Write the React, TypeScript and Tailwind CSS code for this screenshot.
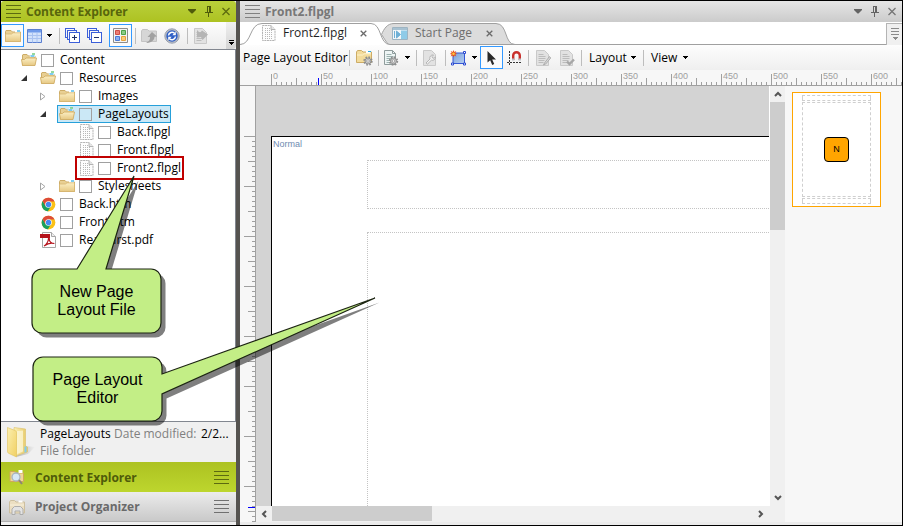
import React, { type ReactNode } from "react";

const UI = "font-['Open_Sans','Noto_Sans',sans-serif]";

/* ---------- small glyphs ---------- */

function Grip({ color }: { color: string }) {
  return (
    <svg width="15" height="13" viewBox="0 0 15 13" shapeRendering="crispEdges" className="shrink-0">
      <path d="M0 .5h15M0 4.5h15M0 8.5h15M0 12.5h15" stroke={color} />
    </svg>
  );
}

function Caret() {
  return (
    <svg width="5" height="3" viewBox="0 0 5 3" className="shrink-0" shapeRendering="crispEdges">
      <path d="M0 0h5v1h-1v1h-1v1h-1v-1h-1v-1h-1z" fill="#000" />
    </svg>
  );
}

function WindowButtons({ color }: { color: string }) {
  return (
    <div className="ml-auto flex items-center gap-[9px]">
      <button type="button" aria-label="Window menu">
        <svg width="8" height="11" viewBox="0 0 8 11" className="block">
          <path d="M0 3h8v1L4.500 7.500h-1L0 4z" fill={color} />
        </svg>
      </button>
      <button type="button" aria-label="Pin">
        <svg width="8" height="11" viewBox="0 0 8 11" className="block" shapeRendering="crispEdges" fill="none" stroke={color}>
          <path d="M2.500 0v6M2 .5h4M4.500 0v6M5.500 0v6M0 6.500h8M3.500 7v4" />
        </svg>
      </button>
      <button type="button" aria-label="Close">
        <svg width="8" height="11" viewBox="0 0 8 11" className="block">
          <path d="M.5 2l7 7M7.500 2l-7 7" stroke={color} strokeWidth="1.300" opacity=".85" />
        </svg>
      </button>
    </div>
  );
}

function Separator() {
  return <div className="h-4 w-px shrink-0 bg-[#bdbdbd]" />;
}

/* ---------- icons ---------- */

function Folder({ open = false }: { open?: boolean }) {
  return (
    <svg width="16" height="16" viewBox="0 0 16 16" className="shrink-0">
      <defs>
        <linearGradient id="fold" x1="0" y1="0" x2="0" y2="1">
          <stop offset="0" stopColor="#fcefc4" />
          <stop offset="1" stopColor="#e6c883" />
        </linearGradient>
      </defs>
      {open ? (
        <>
          <path d="M1.500 13.500V3l.5-.5h4l1.500 1.500h6.500v4" fill="#e8cf93" stroke="#cdac66" />
          <path d="M8.500 4l3-2.500 2.500 1v2.500H9z" fill="#fff" />
          <path d="M11 2h3" stroke="#4fc05a" strokeWidth="1.200" />
          <path d="M9.500 4h4" stroke="#38b1ea" strokeWidth="1.300" />
          <path d="M.5 7.500h3L5 6h10.500l-1.500 7.500H1.500z" fill="url(#fold)" stroke="#d0ad63" strokeWidth=".9" />
        </>
      ) : (
        <>
          <path d="M.5 13.500V3.500l.5-1h5L7.500 4h8v9.500z" fill="#e8cf93" stroke="#cdac66" />
          <path d="M10 2h5v3h-5z" fill="#fff" />
          <path d="M12 3h3" stroke="#38b1ea" strokeWidth="1.300" />
          <path d="M.5 6h6L8 4.800h7.500v8.700H.5z" fill="url(#fold)" stroke="#d6b570" strokeWidth=".8" />
        </>
      )}
    </svg>
  );
}

function Gear({ x, y }: { x: number; y: number }) {
  return (
    <g transform={`translate(${x} ${y})`}>
      <circle r="3.800" fill="none" stroke="#8d8d8d" strokeWidth="1.800" strokeDasharray="1.600 1.385" />
      <circle r="3" fill="#c6c6c6" stroke="#858585" strokeWidth=".8" />
      <circle r="1.200" fill="#fff" stroke="#777" strokeWidth=".5" />
    </g>
  );
}

function LayoutFile() {
  return (
    <svg width="14" height="16" viewBox="0 0 14 16" className="shrink-0">
      <path d="M.5.500h8.500l4 4v11H.5z" fill="#fdfdfd" stroke="#b4b4b4" strokeDasharray="2 .6" />
      <path d="M9 .5v4h4" fill="#e6e6e6" stroke="#b4b4b4" />
      <g stroke="#b8b8b8" strokeDasharray="1 1" shapeRendering="crispEdges">
        <path d="M3 3.500h5M3 5.500h8M3 7.500h8M3 9.500h8M3 11.500h8M3 13.500h8" />
      </g>
    </svg>
  );
}

function Chrome() {
  return (
    <svg width="15" height="15" viewBox="0 0 48 48" className="shrink-0">
      <circle cx="24" cy="24" r="22" fill="#fbc116" />
      <path d="M5 13A22 22 0 0 0 22 45.900L32.500 28.500 24 24 15 29z" fill="#1aa05d" />
      <path d="M5 13l9.500 16.500L24 14h19.100A22 22 0 0 0 5 13z" fill="#dd4b39" />
      <circle cx="24" cy="24" r="10.500" fill="#fff" />
      <circle cx="24" cy="24" r="8.500" fill="#4688f1" />
    </svg>
  );
}

function Pdf() {
  return (
    <svg width="16" height="16" viewBox="0 0 16 16" className="shrink-0">
      <path d="M2.500.500h9l4 4v11h-13z" fill="#fff" stroke="#a6a6a6" />
      <path d="M11.500.500v4h4" fill="#eee" stroke="#a6a6a6" />
      <path d="M0 2h10v4H0z" fill="#b5121b" />
      <path d="M4 14c2-1 4.500-4.500 4.500-7.500 0-1.500 1-1.200.8.3-.3 2.700 2 4.700 5 4.700-3-1-7.500.5-10.300 2.500z" fill="none" stroke="#b5121b" strokeWidth="1.200" />
    </svg>
  );
}

function GridIcon() {
  return (
    <svg width="15" height="14" viewBox="0 0 15 14">
      <path d="M.5.500h14v13H.5z" fill="#d3e3fb" stroke="#5a7fd0" />
      <path d="M1 1h13v2.500H1z" fill="#6f9bea" />
      <path d="M1 6.500h13M1 9.500h13M5.500 4v9.500M10 4v9.500" stroke="#a9c3f0" />
    </svg>
  );
}

function StackIcon({ plus = false }: { plus?: boolean }) {
  return (
    <svg width="15" height="15" viewBox="0 0 15 15" shapeRendering="crispEdges" fill="none" stroke="#3b5fd9">
      <path d="M2.500 9.500h-2v-9h9v2M4.500 11.500h-2v-9h9v2" />
      <path d="M4.500 4.500h10v10h-10z" fill="#fff" />
      <path d="M7 9.500h5" stroke="#1c2f6b" />
      {plus && <path d="M9.500 7v5" stroke="#1c2f6b" />}
    </svg>
  );
}

function TilesIcon() {
  return (
    <svg width="15" height="15" viewBox="0 0 15 15">
      <path d="M.5.500h14v14H.5z" fill="#f4f4f4" stroke="#8d8d8d" />
      <path d="M2.500 2.500h4v4h-4z" fill="#ec7d73" stroke="#cf4d44" />
      <path d="M8.500 2.500h4v4h-4z" fill="#8ccb86" stroke="#4da449" />
      <path d="M2.500 8.500h4v4h-4z" fill="#8aaef0" stroke="#4a7ad6" />
      <path d="M8.500 8.500h4v4h-4z" fill="#fbcb78" stroke="#e6a23c" />
    </svg>
  );
}

function FolderOut() {
  return (
    <svg width="17" height="16" viewBox="0 0 17 16">
      <path d="M.5 13.500V3l1-1.500h5L8 3h7.500v10.500z" fill="#d6d6d6" stroke="#c4c4c4" />
      <path d="M11 4l5 4.500-2.500.2C13.500 12 10 15 5 15c3-1.500 4.300-3.500 4-6L6.500 9z" fill="#a1a1a1" />
    </svg>
  );
}

function RefreshIcon() {
  return (
    <svg width="16" height="16" viewBox="0 0 16 16">
      <circle cx="8" cy="8" r="7.200" fill="#b9bcc4" stroke="#98a0b0" />
      <circle cx="8" cy="8" r="5.700" fill="#2e5fc6" />
      <path d="M4.500 7.500A3.600 3.600 0 0 1 10.500 5.300M11.500 8.500A3.600 3.600 0 0 1 5.500 10.700" fill="none" stroke="#fff" strokeWidth="1.500" />
      <path d="M11.800 3.700v3.600H8.300zM4.200 12.300V8.700h3.500z" fill="#fff" />
    </svg>
  );
}

function GreyDoc({ mark }: { mark: "pencil" | "check" | "wrench" | "arrow" }) {
  return (
    <svg width="15" height="16" viewBox="0 0 15 16">
      <path d="M.5.500h8l4 4v11H.5z" fill="#e2e2e2" stroke="#c9c9c9" />
      {mark !== "wrench" && <path d="M2.500 4.500h5M2.500 6.500h7M2.500 8.500h7M2.500 10.500h6M2.500 12.500h5" stroke="#bcbcbc" />}
      {mark === "pencil" && <path d="M13.500 6.500l-5 6.500-1 2 2.200-1 5-6z" fill="#d8d8d8" stroke="#a8a8a8" strokeWidth=".9" />}
      {mark === "check" && <path d="M7 11.500l2.500 2.500 4.500-4.500" fill="none" stroke="#a6a6a6" strokeWidth="2.400" />}
      {mark === "wrench" && (
        <path d="M3 13l4-4a3 3 0 0 1 3.500-4L9 6.500l.5 1.500 1.500.3 1.400-1.300a3 3 0 0 1-4 3.200L4.500 14z" fill="#f3f3f3" stroke="#b0b0b0" strokeWidth=".9" />
      )}
      {mark === "arrow" && <path d="M3 2l3 3 2-2.500 6 4-5.500 5.500-1.500-3-4 .5z" fill="#b5b5b5" />}
    </svg>
  );
}

function FolderGear() {
  return (
    <svg width="17" height="16" viewBox="0 0 17 16">
      <path d="M.5 12.500V2l1-1.500h4L7 2h8.500v10.500z" fill="#f3dc9c" stroke="#cdac66" />
      <path d="M10 1h4.500v2.500H10z" fill="#fff" />
      <path d="M12 1.500h3" stroke="#2aa9e0" />
      <path d="M1 5h5.500L8 3.800h7" fill="none" stroke="#fdf2cd" />
      <Gear x={12} y={11} />
    </svg>
  );
}

function DocGear() {
  return (
    <svg width="15" height="16" viewBox="0 0 15 16">
      <path d="M.5.500h8l3 3v11H.5z" fill="#eef5f5" stroke="#8f9c9c" />
      <path d="M8.500.500v3h3" fill="none" stroke="#8f9c9c" />
      <path d="M2.500 4.500h5M2.500 6.500h7M2.500 8.500h6M2.500 10.500h4M2.500 12.500h4" stroke="#9cb3b0" />
      <Gear x={9.500} y={11} />
    </svg>
  );
}

function ShapeIcon() {
  return (
    <svg width="17" height="16" viewBox="0 0 17 16">
      <defs>
        <linearGradient id="shape" x1="0" y1="0" x2="1" y2="1">
          <stop offset="0" stopColor="#7ba3dc" />
          <stop offset="1" stopColor="#b5cdf0" />
        </linearGradient>
      </defs>
      <path d="M3 3h11.500v10.500H3z" fill="url(#shape)" stroke="#3457d5" />
      <g fill="#fff" stroke="#2b4ad0">
        <path d="M13.500 1.500h2v2h-2zM1.500 13h2v2h-2zM13.500 13h2v2h-2z" />
      </g>
      <path d="M3.500 0l.8 2 2-1-1 2 2 .8-2 .8 1 2-2-1-.8 2-.8-2-2 1 1-2-2-.8 2-.8-1-2 2 1z" fill="#e8501e" />
      <circle cx="3.500" cy="3.800" r="1.300" fill="#ffc93c" />
    </svg>
  );
}

function PointerIcon() {
  return (
    <svg width="9" height="14" viewBox="0 0 9 14">
      <path d="M.5 0v11.500l2.700-2.300 2 4.800 2-.9-2-4.600H9z" fill="#2a2a2a" />
    </svg>
  );
}

function MagnetIcon() {
  return (
    <svg width="15" height="14" viewBox="0 0 15 14">
      <path d="M6.200 9V4.500a3.300 3.300 0 0 1 6.600 0V9" fill="none" stroke="#c9302c" strokeWidth="2.400" />
      <path d="M5 7.500h2.400V9.500H5zM11.600 7.500H14v2h-2.400z" fill="#b9bec4" />
      <path d="M2.500 0v14M0 11.500h15" stroke="#333" strokeDasharray="2 1" shapeRendering="crispEdges" />
    </svg>
  );
}

function StartPageIcon() {
  return (
    <svg width="16" height="13" viewBox="0 0 16 13">
      <path d="M.5.500h15v12H.5z" fill="#f3f6f8" stroke="#9eb4c2" />
      <path d="M1 1h14v2H1z" fill="#a8c2d2" />
      <path d="M9 3.500h6V12H9z" fill="#8fcbe8" />
      <path d="M2.500 4v7M4.500 4l4 3.500-4 3.500z" stroke="#6fb0d6" fill="#6fb0d6" />
    </svg>
  );
}

function LargeFolder() {
  return (
    <svg width="29" height="32" viewBox="0 0 29 32" className="shrink-0">
      <defs>
        <linearGradient id="big" x1="0" y1="0" x2="1" y2="0">
          <stop offset="0" stopColor="#fbf0b4" />
          <stop offset="1" stopColor="#e5c765" />
        </linearGradient>
        <linearGradient id="flap" x1="0" y1="0" x2="1" y2="1">
          <stop offset="0" stopColor="#fbefad" />
          <stop offset="1" stopColor="#f1d064" />
        </linearGradient>
        <linearGradient id="cast" x1="0" y1="0" x2="1" y2="0">
          <stop offset="0" stopColor="#b4b4b4" />
          <stop offset="1" stopColor="#f0f0f0" />
        </linearGradient>
      </defs>
      <path d="M18 20l10 1-7 7-12 3z" fill="url(#cast)" />
      <path d="M7 1.500l11.500 1.500v17l2 1v5L8 30z" fill="url(#big)" stroke="#dcc067" strokeWidth=".6" />
      <path d="M10 5l6-.5v21L10 28z" fill="#fdf9df" opacity=".7" />
      <path d="M.5 1.500L8 4.500c1 .5 1.500 1 1.500 2V31L2 27.500C1 27 .5 26.500.500 25.500z" fill="url(#flap)" stroke="#e0c25d" strokeWidth=".6" />
      <path d="M17.500 20.500h2v5.500l-2 .7z" fill="#7fcbee" />
    </svg>
  );
}

function ExplorerIcon() {
  return (
    <svg width="16" height="16" viewBox="0 0 16 16">
      <path d="M1 12.500V2.500h5L7.500 4H14.500v8.500z" fill="#f0d596" stroke="#cfa95a" />
      <path d="M9.500 1h4v3h-4z" fill="#fff" />
      <circle cx="7" cy="8" r="4" fill="#d7e8f8" stroke="#a7b3c0" strokeWidth="1.300" />
      <path d="M10 11l3 4" stroke="#8d8577" strokeWidth="2" />
    </svg>
  );
}

function OrganizerIcon() {
  return (
    <svg width="16" height="16" viewBox="0 0 16 16">
      <path d="M.5 14V3l1-1.500h4L7 3h8.500v11z" fill="#ecdfc2" stroke="#cdbf9f" />
      <path d="M9.500 1.500h4v2h-4z" fill="#fff" />
      <path d="M1 6h14" stroke="#f8f1dd" />
      <path d="M3 15.500V10l2.500-2.500h6L14 10v5.500h-3V12H6v3.500z" fill="#e3e3e3" stroke="#a8a8a8" strokeWidth=".9" />
    </svg>
  );
}

/* ---------- content tree ---------- */

type Kind = "open" | "closed" | "layout" | "html" | "pdf";
type Node = { label: string; kind: Kind; indent: string; toggle?: "open" | "closed"; state?: "selected" | "marked" };

const nodes: Node[] = [
  { label: "Content", kind: "open", indent: "pl-0" },
  { label: "Resources", kind: "open", indent: "pl-[19px]", toggle: "open" },
  { label: "Images", kind: "closed", indent: "pl-[38px]", toggle: "closed" },
  { label: "PageLayouts", kind: "open", indent: "pl-[38px]", toggle: "open", state: "selected" },
  { label: "Back.flpgl", kind: "layout", indent: "pl-[57px]" },
  { label: "Front.flpgl", kind: "layout", indent: "pl-[57px]" },
  { label: "Front2.flpgl", kind: "layout", indent: "pl-[57px]", state: "marked" },
  { label: "Stylesheets", kind: "closed", indent: "pl-[38px]", toggle: "closed" },
  { label: "Back.htm", kind: "html", indent: "pl-[19px]" },
  { label: "Front.htm", kind: "html", indent: "pl-[19px]" },
  { label: "ReadFirst.pdf", kind: "pdf", indent: "pl-[19px]" },
];

function NodeIcon({ kind }: { kind: Kind }) {
  if (kind === "open") return <Folder open />;
  if (kind === "closed") return <Folder />;
  if (kind === "layout") return <LayoutFile />;
  if (kind === "html") return <Chrome />;
  return <Pdf />;
}

function TreeRow({ node }: { node: Node }) {
  const id = "node-" + node.label;
  return (
    <li className={`flex h-[18px] items-center ${node.indent}`}>
      <span className="flex w-[17px] shrink-0 items-center">
        {node.toggle === "open" && (
          <svg width="6" height="6" viewBox="0 0 6 6"><path d="M6 0v6H0z" fill="#333" /></svg>
        )}
        {node.toggle === "closed" && (
          <svg width="6" height="9" viewBox="0 0 6 9"><path d="M.5 1v7L5 4.500z" fill="#fff" stroke="#a6a6a6" /></svg>
        )}
      </span>
      <div
        className={`relative flex h-[18px] items-center px-[2px] ${
          node.state === "selected" ? "bg-[#cbe8f6] outline-1 -outline-offset-1 outline-[#26a0da]" : ""
        }`}
      >
        {node.state === "marked" && (
          <span className="absolute -bottom-[3px] -left-px -right-[1px] -top-[3px] border-2 border-[#c00000]" />
        )}
        <span className={`flex w-[20px] shrink-0 items-center ${node.kind === "layout" ? "pl-[2px]" : node.kind === "html" ? "pl-px" : ""}`}>
          <NodeIcon kind={node.kind} />
        </span>
        <input
          id={id}
          type="checkbox"
          className={`size-[13px] shrink-0 appearance-none border border-[#a0a0a0] ${node.state === "selected" ? "bg-transparent" : "bg-white"}`}
        />
        <label htmlFor={id} className="whitespace-nowrap pl-[6px] text-[12px] leading-[18px] text-black">
          {node.label}
        </label>
      </div>
    </li>
  );
}

/* ---------- left panel ---------- */

function IconButton({ label, active = false, width, children }: { label: string; active?: boolean; width: string; children: ReactNode }) {
  return (
    <button
      type="button"
      aria-label={label}
      className={`flex h-[23px] shrink-0 items-center justify-center ${width} ${active ? "border border-[#3399ff] bg-[#fbfbfb]" : ""}`}
    >
      {children}
    </button>
  );
}

function Explorer() {
  return (
    <aside className="flex w-[235px] shrink-0 flex-col bg-[#f0f0f0]">
      <header className="flex h-[21px] shrink-0 items-center rounded-t-[3px] bg-linear-to-b from-[#b9d03a] to-[#adc221] pl-[5px] pr-[6px]">
        <Grip color="#5c6a10" />
        <h2 className="pl-[5px] text-[12px] font-bold leading-[18px] text-[#58650c]">Content Explorer</h2>
        <WindowButtons color="#4f5b0a" />
      </header>
      <div className="flex h-[28px] shrink-0 items-center border-b border-[#828790] bg-linear-to-b from-[#fdfdfd] to-[#ececec]">
        <IconButton label="Open folder" active width="w-[23px]"><Folder /></IconButton>
        <IconButton label="View" width="w-[20px]"><GridIcon /></IconButton>
        <IconButton label="View options" width="w-[10px]"><Caret /></IconButton>
        <div className="flex w-[10px] justify-center"><Separator /></div>
        <IconButton label="Expand all" width="w-[16px]"><StackIcon plus /></IconButton>
        <IconButton label="Collapse all" width="w-[29px]"><StackIcon /></IconButton>
        <IconButton label="Show all files" active width="w-[23px]"><TilesIcon /></IconButton>
        <div className="flex w-[7px] justify-center"><Separator /></div>
        <IconButton label="Import" width="w-[21px]"><FolderOut /></IconButton>
        <IconButton label="Refresh" width="w-[24px]"><RefreshIcon /></IconButton>
        <div className="flex w-[7px] justify-center"><Separator /></div>
        <IconButton label="Properties" width="w-[21px]"><GreyDoc mark="arrow" /></IconButton>
        <button type="button" aria-label="More" className="ml-auto flex h-full w-[10px] flex-col items-center justify-end gap-px rounded-br bg-linear-to-b from-[#f0f0f0] to-[#d4d4d4] pb-1">
          <span className="h-px w-[5px] bg-black" />
          <Caret />
        </button>
      </div>
      <ul className="min-h-0 flex-1 overflow-hidden border-r border-[#828790] bg-white pl-px pt-px">
        {nodes.map((n) => <TreeRow key={n.label} node={n} />)}
      </ul>
      <div className="flex h-[41px] shrink-0 items-center border-t border-[#828790] pl-[6px]">
        <LargeFolder />
        <div className="pl-1 text-[12px] leading-[17px]">
          <div className="flex">
            <span className="w-[74px] text-black">PageLayouts</span>
            <span className="w-[87px] whitespace-nowrap text-[#808080]">Date modified:</span>
            <span className="text-black">2/2...</span>
          </div>
          <div className="text-[#808080]">File folder</div>
        </div>
      </div>
      <button type="button" className="flex h-[30px] shrink-0 items-center bg-linear-to-b from-[#adc221] to-[#bdd62e] pl-2 pr-[7px] text-[12px] font-bold text-[#4f5b0a]">
        <ExplorerIcon />
        <span className="flex-1 pl-[10px] pt-px text-left">Content Explorer</span>
        <Grip color="#5c6a10" />
      </button>
      <button type="button" className="flex h-[30px] shrink-0 items-center border-b border-[#b0b0b0] bg-linear-to-b from-[#ececec] to-[#c9c9c9] pl-2 pr-[7px] text-[12px] font-bold text-[#6a6a6a]">
        <OrganizerIcon />
        <span className="flex-1 pl-[10px] pt-px text-left">Project Organizer</span>
        <Grip color="#707070" />
      </button>
      <div className="h-[3px] shrink-0 bg-[#f0f0f0]" />
    </aside>
  );
}

/* ---------- right panel ---------- */

function TabClose({ label }: { label: string }) {
  return (
    <button type="button" aria-label={label}>
      <svg width="7" height="7" viewBox="0 0 7 7" className="block"><path d="M.7.700l5.600 5.600M6.300.700L.7 6.300" stroke="#6a6a6a" strokeWidth="1.300" /></svg>
    </button>
  );
}

function Tabs() {
  return (
    <div className="relative flex h-[23px] shrink-0 items-center border-b border-[#a0a0a0] bg-white">
      <svg width="280" height="23" viewBox="0 0 280 23" className="absolute left-0 top-0" fill="none">
        <path d="M141.500 12.500C144 7 147 1.500 154 1.500H256C268 1.500 264 22.500 275 22.500H148.500C146 20 144 16 141.500 12.500z" fill="#dcdcdc" stroke="#a0a0a0" />
        <path d="M0 22.500C12 22.500 9 1.500 22 1.500H131C142 1.500 139 22.500 150 22.500V23H0z" fill="#fff" />
        <path d="M0 22.500C12 22.500 9 1.500 22 1.500H131C142 1.500 139 22.500 150 22.500" stroke="#a0a0a0" />
      </svg>
      <div className="relative flex w-[150px] items-center pl-[22px]">
        <LayoutFile />
        <button type="button" className="w-[84px] whitespace-nowrap pl-[7px] text-left text-[12px] leading-[18px] text-[#1f1f1f]">Front2.flpgl</button>
        <TabClose label="Close Front2.flpgl" />
      </div>
      <div className="relative flex items-center pl-[2px]">
        <StartPageIcon />
        <button type="button" className="w-[78px] whitespace-nowrap pl-[7px] text-left text-[12px] leading-[18px] text-[#6e6e6e]">Start Page</button>
        <TabClose label="Close Start Page" />
      </div>
      <button type="button" aria-label="Tab list" className="-mb-px ml-auto flex h-[22px] w-[16px] items-center justify-center border-l border-t border-[#b4b4b4] bg-[#f0f0f0]">
        <svg width="8" height="12" viewBox="0 0 8 12" shapeRendering="crispEdges">
          <path d="M0 .5h8M0 3.500h8M0 6.500h8" stroke="#8a8a8a" />
          <path d="M1 9h6l-3 3z" fill="#8a8a8a" />
        </svg>
      </button>
    </div>
  );
}

function EditorToolbar() {
  return (
    <div className="flex h-[25px] shrink-0 items-center bg-linear-to-b from-[#fdfdfd] to-[#efefef] pl-[3px] text-[12px] text-black">
      <span className="w-[104px] whitespace-nowrap">Page Layout Editor</span>
      <div className="flex w-[5px] justify-center"><Separator /></div>
      <IconButton label="Open" width="w-[24px]"><FolderGear /></IconButton>
      <div className="flex w-[4px] justify-center"><Separator /></div>
      <IconButton label="Page properties" width="w-[22px]"><DocGear /></IconButton>
      <IconButton label="Page menu" width="w-[11px]"><Caret /></IconButton>
      <div className="flex w-[7px] justify-center"><Separator /></div>
      <IconButton label="Frame properties" width="w-[21px]"><GreyDoc mark="wrench" /></IconButton>
      <div className="flex w-[8px] justify-center"><Separator /></div>
      <IconButton label="Draw frame" width="w-[19px]"><ShapeIcon /></IconButton>
      <IconButton label="Frame menu" width="w-[12px]"><Caret /></IconButton>
      <IconButton label="Select" active width="w-[23px]"><PointerIcon /></IconButton>
      <IconButton label="Snap" width="w-[22px]"><MagnetIcon /></IconButton>
      <div className="flex w-[7px] justify-center"><Separator /></div>
      <IconButton label="Edit" width="w-[23px]"><GreyDoc mark="pencil" /></IconButton>
      <IconButton label="Accept" width="w-[24px]"><GreyDoc mark="check" /></IconButton>
      <div className="flex w-[3px] justify-end"><Separator /></div>
      <button type="button" className="flex w-[61px] items-center justify-between pl-[7px] pr-[7px]">Layout<Caret /></button>
      <Separator />
      <button type="button" className="flex w-[51px] items-center justify-between pl-[7px] pr-[7px]">View<Caret /></button>
    </div>
  );
}

const minorTicks = [5, 10, 15, 20, 30, 35, 40, 45];

function HorizontalRuler() {
  return (
    <div className="relative flex h-[16px] shrink-0 overflow-hidden border-b border-[#a0a0a0] bg-[#f7f7f7] pl-[31px]">
      {Array.from({ length: 13 }, (_, i) => (
        <div key={i} className="relative w-[50px] shrink-0">
          <svg width="50" height="15" viewBox="0 0 50 15" shapeRendering="crispEdges" className="absolute left-0 top-0" stroke="#a0a0a0">
            <path d="M.5 4v11M25.500 8v7" />
            {minorTicks.map((t) => <path key={t} d={`M${t + 0.5} 12v3`} />)}
          </svg>
          <span className="relative block pl-[2px] font-['Liberation_Sans',Arial,sans-serif] text-[9px] leading-[12px] text-[#a0a0a0]">{i * 50}</span>
        </div>
      ))}
      <span className="absolute bottom-0 left-[78px] h-[7px] w-px bg-[#0000ff]" />
    </div>
  );
}

function VerticalRuler() {
  return (
    <div className="relative w-[16px] shrink-0 overflow-hidden border-r border-[#a0a0a0] bg-[#f7f7f7] pt-[50px]">
      {Array.from({ length: 30 }, (_, i) => (
        <svg key={i} width="15" height="50" viewBox="0 0 15 50" shapeRendering="crispEdges" className="block" stroke="#a0a0a0">
          <path d="M4 .5h11M8 25.500h7" />
          {minorTicks.map((t) => <path key={t} d={`M12 ${t + 0.5}h3`} />)}
        </svg>
      ))}
      <span className="absolute bottom-[14px] right-0 h-px w-[7px] bg-[#0000ff]" />
    </div>
  );
}

function Chevron({ d, label }: { d: string; label: string }) {
  return (
    <button type="button" aria-label={label} className="flex size-[16px] shrink-0 items-center justify-center">
      <svg width="8" height="8" viewBox="0 0 8 8"><path d={d} fill="none" stroke="#555" strokeWidth="2" /></svg>
    </button>
  );
}

function Canvas() {
  return (
    <div className="flex min-w-0 flex-1 flex-col">
      <div className="flex min-h-0 flex-1">
        <div className="min-w-0 flex-1 overflow-hidden bg-[#d3d3d3] pl-[15px] pt-[50px]">
          <div className="flex h-full flex-col border-l border-t border-black bg-white">
            <span className="h-[23px] shrink-0 pl-px pt-[2px] font-['Liberation_Sans',Arial,sans-serif] text-[9px] leading-[11px] text-[#6f8bb0]">Normal</span>
            <div className="ml-[95px] h-[49px] shrink-0 border-y border-l border-dotted border-[#c4c4c4]" />
            <div className="ml-[95px] mt-[23px] flex-1 border-l border-t border-dotted border-[#c4c4c4]" />
          </div>
        </div>
        <div className="flex w-[16px] shrink-0 flex-col border-l border-white bg-[#f0f0f0]">
          <Chevron label="Scroll up" d="M1 6l3-3 3 3" />
          <div className="h-[128px] w-[15px] bg-[#cdcdcd]" />
          <div className="mt-auto"><Chevron label="Scroll down" d="M1 2l3 3 3-3" /></div>
        </div>
      </div>
      <div className="flex h-[16px] shrink-0 bg-[#f0f0f0]">
        <Chevron label="Scroll left" d="M6 1L3 4l3 3" />
        <div className="h-[15px] w-[160px] bg-[#cdcdcd]" />
        <div className="ml-auto mr-[16px]"><Chevron label="Scroll right" d="M2 1l3 3-3 3" /></div>
      </div>
    </div>
  );
}

function PageThumbnails() {
  return (
    <div className="w-[117px] shrink-0 bg-[#f7f7f7] pl-[7px] pt-[6px]">
      <div className="flex h-[115px] w-[89px] flex-col gap-px border border-[#ffa500] bg-white px-[9px] py-[2px]">
        <div className="h-[6px] border border-dashed border-[#cfcfcf]" />
        <div className="flex flex-1 items-center justify-center border border-dashed border-[#cfcfcf]">
          <button type="button" className="flex size-[25px] items-center justify-center rounded-[4px] border border-black bg-[#ffa500] font-['Liberation_Sans',Arial,sans-serif] text-[9px] text-black">N</button>
        </div>
        <div className="h-[6px] border border-dashed border-[#cfcfcf]" />
      </div>
    </div>
  );
}

function Editor() {
  return (
    <main className="flex min-w-0 flex-1 flex-col bg-[#ececec]">
      <header className="flex h-[21px] shrink-0 items-center rounded-t-[3px] bg-linear-to-b from-[#e6e6e6] to-[#cbcbcb] pl-[5px] pr-[6px]">
        <Grip color="#808080" />
        <h1 className="pl-[5px] text-[12px] font-bold leading-[18px] text-[#787878]">Front2.flpgl</h1>
        <WindowButtons color="#646464" />
      </header>
      <Tabs />
      <EditorToolbar />
      <HorizontalRuler />
      <div className="flex min-h-0 flex-1">
        <VerticalRuler />
        <Canvas />
        <PageThumbnails />
      </div>
      <div className="h-[3px] shrink-0 bg-[#ebebeb]" />
    </main>
  );
}

/* ---------- callouts ---------- */

const fileCallout = "M42 269H77L134 176 106 269H151a10 10 0 0 1 10 10V323a10 10 0 0 1-10 10H42a10 10 0 0 1-10-10V279a10 10 0 0 1 10-10z";
const editorCallout = "M43 357H152a10 10 0 0 1 10 10V374L375 298 162 394V411a10 10 0 0 1-10 10H43a10 10 0 0 1-10-10V367a10 10 0 0 1 10-10z";

function Callouts() {
  const text = "absolute flex h-[64px] w-[129px] items-center justify-center text-center font-['Liberation_Sans',Arial,sans-serif] text-[16px] leading-[18px] text-black";
  return (
    <div className="pointer-events-none absolute -inset-px">
      <svg width="400" height="440" viewBox="0 0 400 440" className="absolute left-0 top-0">
        {[fileCallout, editorCallout].map((d) => (
          <g key={d}>
            <path d={d} transform="translate(4.500 4.500)" fill="#000" opacity=".5" />
            <path d={d} fill="#c3ee86" stroke="#1c2412" strokeWidth="1.200" />
          </g>
        ))}
      </svg>
      <p className={`${text} left-8 top-[269px]`}>New Page<br />Layout File</p>
      <p className={`${text} left-[33px] top-[357px]`}>Page Layout<br />Editor</p>
    </div>
  );
}

export default function App() {
  return (
    <div className={`relative flex h-screen overflow-hidden border border-black bg-[#555350] ${UI}`}>
      <Explorer />
      <div className="w-[4px] shrink-0" />
      <Editor />
      <Callouts />
    </div>
  );
}
